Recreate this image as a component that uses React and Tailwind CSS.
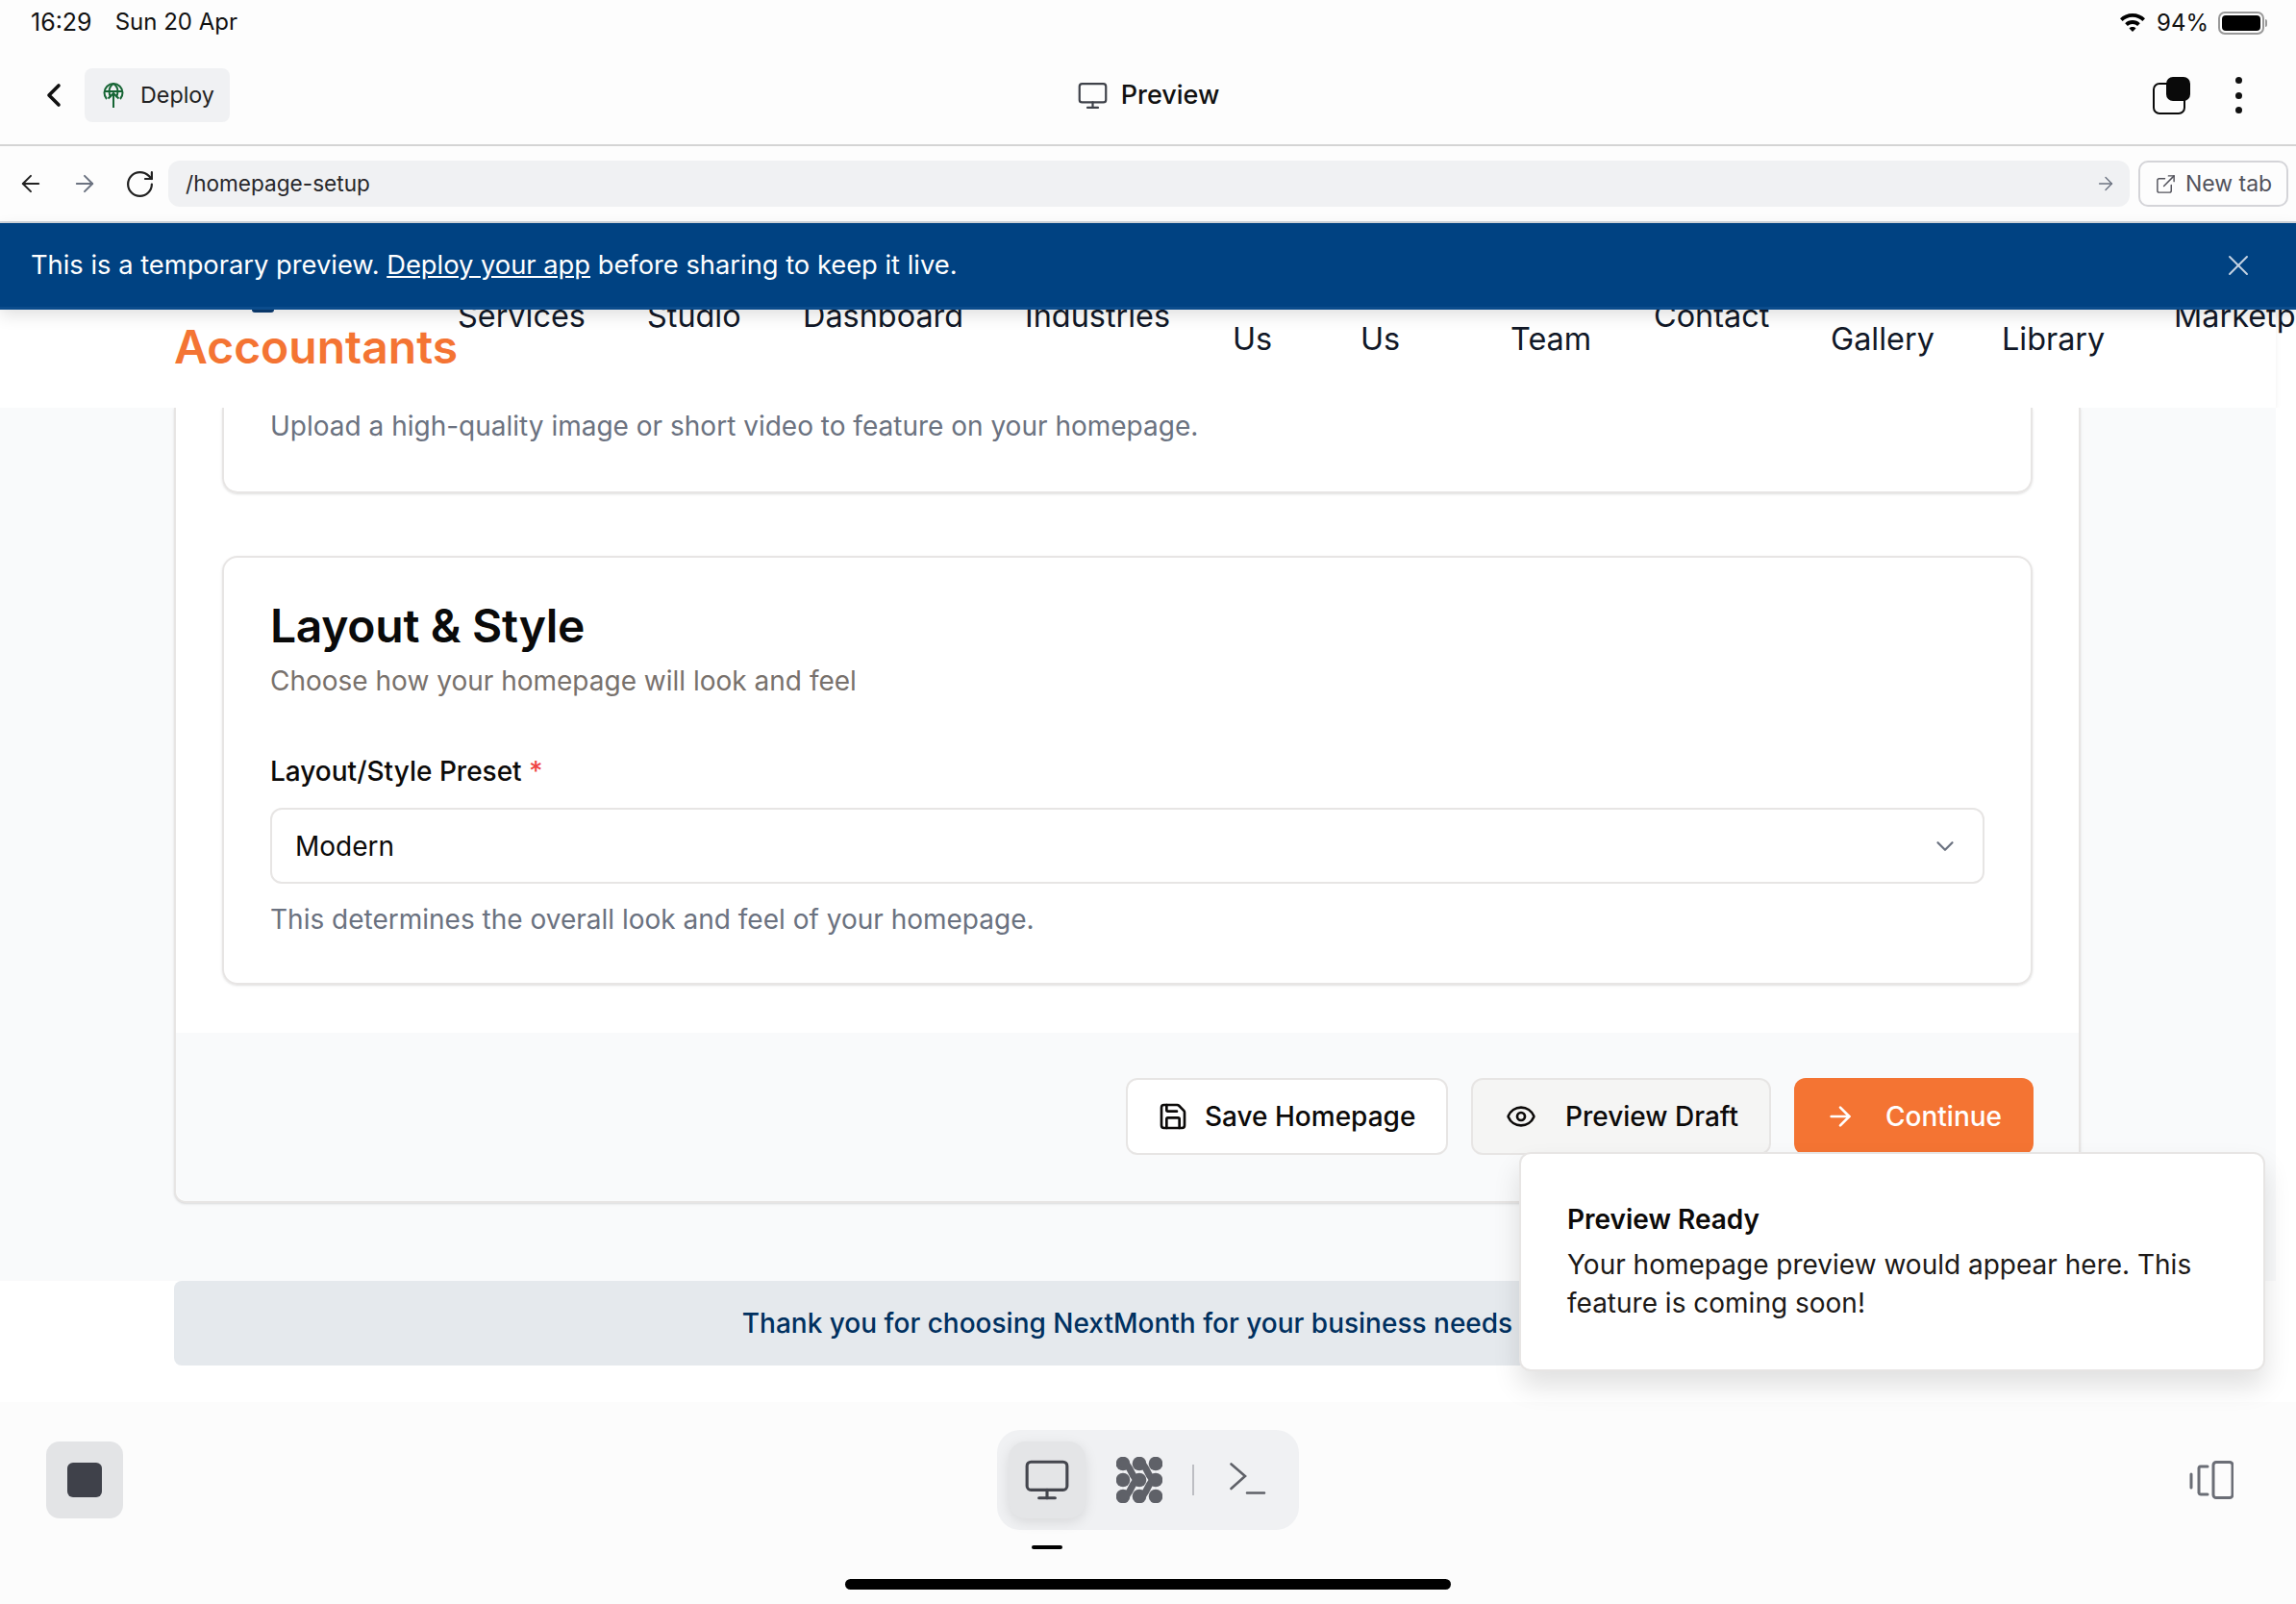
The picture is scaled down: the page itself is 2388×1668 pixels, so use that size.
import React from "react";
import { ChevronLeft, Monitor, ArrowLeft, ArrowRight, RotateCw, ExternalLink, X, Save, Eye, ChevronDown } from "lucide-react";

const NavItem = ({ w, low, lines }) => (
  <div className={`shrink-0 whitespace-nowrap text-[32.4px] leading-[48px] font-normal text-[#111827] ${low ? "mt-[7px]" : "mt-[-17px]"} ${w}`}>
    {lines}
  </div>
);

function Cluster() {
  return (
    <svg width="48" height="48" viewBox="0 0 48 48" fill="#5f6168">
      {[7, 24, 41].flatMap((x) => [7, 24, 41].map((y) => <circle key={x + "-" + y} cx={x} cy={y} r="7.300" />))}
      <g fill="none" stroke="#5f6168" strokeWidth="7" strokeLinecap="round">
        <path d="M7 7C16 7 15 24 24 24" />
        <path d="M24 7C33 7 32 24 41 24" />
        <path d="M24 24C15 24 16 41 7 41" />
        <path d="M41 24C32 24 33 41 24 41" />
      </g>
    </svg>
  );
}

export default function App() {
  return (
    <div className="relative flex h-[1668px] w-[2388px] flex-col overflow-hidden bg-white font-['Inter',sans-serif] text-[#111827]">
      {/* status bar */}
      <div className="flex h-[46px] items-center justify-between bg-[#fdfdfd] pl-[32px] pr-[30px] pt-[1px] text-[24px] text-[#111]">
        <div className="flex gap-[24px]">
          <span className="text-[25px]">16:29</span>
          <span>Sun 20 Apr</span>
        </div>
        <div className="flex items-center gap-[8px]">
          <svg width="28" height="22" viewBox="0 0 28 22" fill="#000" className="mr-[3px]">
            <path d="M14 1C8.8 1 4.2 3 1 6.2l2.6 2.8C6.2 6.400 9.900 4.800 14 4.800s7.800 1.600 10.400 4.200L27 6.200C23.800 3 19.200 1 14 1z" />
            <path d="M14 8c-3 0-5.800 1.200-7.800 3.200l2.700 2.800c1.300-1.300 3.100-2.100 5.100-2.100s3.800.8 5.100 2.100l2.700-2.800C19.800 9.200 17 8 14 8z" />
            <path d="M14 15c-1.400 0-2.600.5-3.500 1.400L14 20l3.500-3.600c-.9-.9-2.100-1.400-3.500-1.400z" />
          </svg>
          <span className="mr-[2px]">94%</span>
          <div className="flex items-center gap-[1px]">
            <div className="flex h-[24px] w-[48px] items-center justify-center rounded-[7px] border-2 border-[#999]">
              <div className="h-[16px] w-[40px] rounded-[4px] bg-black" />
            </div>
            <div className="h-[8px] w-[2px] rounded-r-full bg-[#999]" />
          </div>
        </div>
      </div>

      {/* header */}
      <div className="grid h-[106px] grid-cols-3 items-center border-b-2 border-[#d4d4d4] bg-[#fdfdfd] pt-[2px]">
        <div className="flex items-center">
          <ChevronLeft className="ml-[36px] mr-[12px]" size={40} strokeWidth={2.2} color="#111" />
          <div className="flex h-[56px] w-[151px] items-center rounded-[8px] bg-[#f0f1f3] pl-[18px] text-[23.300px] text-[#222]">
            <svg width="24" height="28" viewBox="0 0 24 28" fill="none" stroke="#166534" strokeWidth="2" className="mr-[16px] shrink-0">
              <path d="M5 18A9.500 9.500 0 1 1 19 18" />
              <path d="M3 10h18M12 2c-3 2-4.500 5-4.500 8s1 5 2 6M12 2c3 2 4.500 5 4.500 8s-1 5-2 6" />
              <path d="M12 27V12M6.500 17.500L12 12l5.500 5.500" />
            </svg>
            Deploy
          </div>
        </div>
        <div className="flex items-center justify-center gap-[13px] text-[27px] font-medium text-[#111]">
          <Monitor size={33} strokeWidth={1.6} color="#3f424a" />
          Preview
        </div>
        <div className="flex items-center justify-end pr-[56px]">
          <div className="relative mr-[47px] h-[39px] w-[39px]">
            <div className="absolute bottom-0 left-0 h-[33px] w-[34px] rounded-[7px] border-[2.500px] border-[#0a0a0a]" />
            <div className="absolute right-0 top-0 h-[25px] w-[25px] rounded-[7px] bg-[#0a0a0a]" />
          </div>
          <div className="flex h-[38px] flex-col justify-between">
            <div className="h-[7px] w-[7px] rounded-full bg-[#111]" />
            <div className="h-[7px] w-[7px] rounded-full bg-[#111]" />
            <div className="h-[7px] w-[7px] rounded-full bg-[#111]" />
          </div>
        </div>
      </div>

      {/* url bar */}
      <div className="flex h-[80px] items-center border-b-2 border-[#d1d5db] bg-[#fdfdfd] pl-[18px] pr-[8px]">
        <ArrowLeft size={28} strokeWidth={1.7} color="#222" />
        <ArrowRight className="ml-[28px]" size={28} strokeWidth={1.7} color="#6b7280" />
        <RotateCw className="ml-[27px]" size={33} strokeWidth={1.6} color="#222" />
        <div className="ml-[13px] flex h-[48px] flex-1 items-center justify-between rounded-[12px] bg-[#f0f1f3] pl-[18px] pr-[14px] text-[22.600px] text-[#27272a]">
          /homepage-setup
          <ArrowRight size={22} strokeWidth={1.5} color="#6b7280" />
        </div>
        <div className="ml-[9px] flex h-[48px] w-[156px] items-center justify-center gap-[9px] rounded-[10px] border-2 border-[#d4d4d8] text-[23px] text-[#52525b]">
          <ExternalLink size={23} strokeWidth={1.5} />
          New tab
        </div>
      </div>

      {/* banner */}
      <div className="relative z-20 flex h-[90px] items-center justify-between border-b-[3px] border-[#0b4c8c] bg-[#004282] pl-[32px] pr-[42px] pt-[1px] text-[27.300px] text-white shadow-[0_6px_16px_rgba(0,0,0,0.12)]">
        <div>
          This is a temporary preview. <span className="underline">Deploy your app</span> before sharing to keep it live.
        </div>
        <X size={36} strokeWidth={1.3} color="#c5d3e3" />
      </div>

      {/* site nav */}
      <div className="relative z-10 h-[102px] overflow-hidden">
        <div className="absolute left-[262px] top-0 h-[3px] w-[23px] rounded-b-full bg-[#0b3d73]" />
        <div className="flex h-[102px] w-[2367px] bg-white pl-[181px] shadow-[0_2px_6px_rgba(0,0,0,0.06)]">
          <div className="mt-[6px] w-[295px] shrink-0 whitespace-nowrap text-[48px] font-semibold leading-[66px] text-[#f47433]">Accountants</div>
          <NavItem w="w-[197px]" lines="Services" />
          <NavItem w="w-[162px]" lines="Studio" />
          <NavItem w="w-[231px]" lines="Dashboard" />
          <NavItem w="w-[216px]" lines="Industries" />
          <NavItem w="w-[133px]" low lines="Us" />
          <NavItem w="w-[156px]" low lines="Us" />
          <NavItem w="w-[149px]" low lines="Team" />
          <NavItem w="w-[184px]" lines="Contact" />
          <NavItem w="w-[178px]" low lines="Gallery" />
          <NavItem w="w-[179px]" low lines="Library" />
          <NavItem w="w-[200px]" lines="Marketplace" />
        </div>
      </div>

      {/* main */}
      <div className="h-[908px] w-[2367px] bg-[#f9fafb] pl-[181px] pr-[203px]">
        <div className="h-[827px] rounded-b-[12px] border-x-2 border-b-2 border-[#e7e5e4] bg-white shadow-sm">
          <div className="px-[48px]">
            <div className="h-[89px] rounded-b-[16px] border-x-2 border-b-2 border-[#e7e5e4] pl-[48px] text-[28px] leading-[38px] text-[#6b7280] shadow-sm">
              Upload a high-quality image or short video to feature on your homepage.
            </div>
            <div className="mt-[65px] h-[446px] rounded-[16px] border-2 border-[#e7e5e4] px-[48px] pt-[41px] shadow-sm">
              <div className="text-[48px] font-semibold leading-[60px] tracking-[-0.300px] text-[#0a0a0a]">Layout &amp; Style</div>
              <div className="mt-[7px] text-[28px] leading-[40px] text-[#78716c]">Choose how your homepage will look and feel</div>
              <div className="mt-[54px] text-[28px] font-medium leading-[40px] text-[#0c0a09]">
                Layout/Style Preset <span className="text-[#ef4444]">*</span>
              </div>
              <div className="mt-[18px] flex h-[79px] items-center justify-between rounded-[12px] border-2 border-[#e7e5e4] pl-[24px] pr-[24px] text-[28px] text-[#0c0a09]">
                Modern
                <ChevronDown size={30} strokeWidth={1.8} color="#6b7280" />
              </div>
              <div className="mt-[17px] text-[28px] leading-[40px] text-[#6b7280]">This determines the overall look and feel of your homepage.</div>
            </div>
          </div>
          <div className="mt-[50px] flex h-[175px] justify-end gap-[24px] rounded-b-[12px] bg-[#f9fafb] pr-[47px] pt-[47px]">
            <div className="flex h-[80px] w-[335px] items-center rounded-[12px] border-2 border-[#e7e5e4] bg-white pl-[31px] text-[28px] font-medium text-[#0c0a09]">
              <Save size={32} strokeWidth={2} className="mr-[17px]" />
              Save Homepage
            </div>
            <div className="flex h-[80px] w-[312px] items-center rounded-[12px] border-2 border-[#e7e5e4] bg-[#f5f5f4] pl-[34px] text-[28px] font-medium text-[#0c0a09]">
              <Eye size={32} strokeWidth={2} className="mr-[30px]" />
              Preview Draft
            </div>
            <div className="flex h-[80px] w-[249px] items-center rounded-[12px] bg-[#f47433] pl-[32px] text-[28px] font-medium text-white">
              <ArrowRight size={32} strokeWidth={2} className="mr-[31px]" />
              Continue
            </div>
          </div>
        </div>
      </div>

      {/* footer note */}
      <div className="h-[126px] bg-white pl-[181px]">
        <div className="flex h-[88px] w-[1983px] items-center justify-center rounded-[8px] bg-[#e5e9ed] text-[28px] font-medium text-[#00305f]">
          Thank you for choosing NextMonth for your business needs
        </div>
      </div>

      {/* bottom toolbar */}
      <div className="relative flex-1 bg-[#fcfcfc]">
        <div className="ml-[48px] mt-[41px] flex items-start">
          <div className="flex h-[80px] w-[80px] items-center justify-center rounded-[14px] bg-[#e3e4e6]">
            <div className="h-[36px] w-[36px] rounded-[6px] bg-[#3f414a]" />
          </div>
          <div className="ml-[909px] mt-[-12px]">
            <div className="flex h-[104px] w-[314px] items-center rounded-[24px] bg-[#f0f1f3] pl-[12px]">
              <div className="flex h-[80px] w-[80px] items-center justify-center rounded-[18px] bg-[#e4e5e7] shadow-[0_4px_14px_rgba(0,0,0,0.1)]">
                <Monitor size={50} strokeWidth={1.5} color="#44464e" />
              </div>
              <div className="ml-[32px]"><Cluster /></div>
              <div className="ml-[31px] h-[32px] w-[2px] bg-[#bdbec3]" />
              <svg width="40" height="36" viewBox="0 0 40 36" fill="none" stroke="#5f6168" strokeWidth="2.600" strokeLinecap="round" className="ml-[37px]">
                <path d="M1.500 1.500L16 14 1.500 27M18 31.500h18" />
              </svg>
            </div>
            <div className="ml-[36px] mt-[16px] h-[4px] w-[32px] rounded-full bg-black" />
          </div>
          <svg width="46" height="40" viewBox="0 0 46 40" fill="none" stroke="#6b6e76" strokeWidth="3" strokeLinecap="round" strokeLinejoin="round" className="ml-[926px] mt-[20px] shrink-0">
            <path d="M2 14v14M19 6h-7a2 2 0 0 0-2 1.500v26a2 2 0 0 0 2 1.500h7" />
            <rect x="25" y="1.500" width="20" height="37" rx="3" />
          </svg>
        </div>
        <div className="absolute bottom-[15px] left-[879px] h-[11px] w-[630px] rounded-full bg-black" />
      </div>

      {/* toast */}
      <div className="absolute left-[1580px] top-[1198px] z-30 h-[228px] w-[776px] rounded-[12px] border-2 border-[#e7e5e4] bg-white pl-[48px] pt-[48px] shadow-[0_16px_28px_rgba(0,0,0,0.12)]">
        <div className="text-[28px] font-semibold leading-[40px] text-[#0c0a09]">Preview Ready</div>
        <div className="mt-[7px] text-[28px] leading-[40px] text-[#1c1917]">
          Your homepage preview would appear here. This<br />feature is coming soon!
        </div>
      </div>
    </div>
  );
}
